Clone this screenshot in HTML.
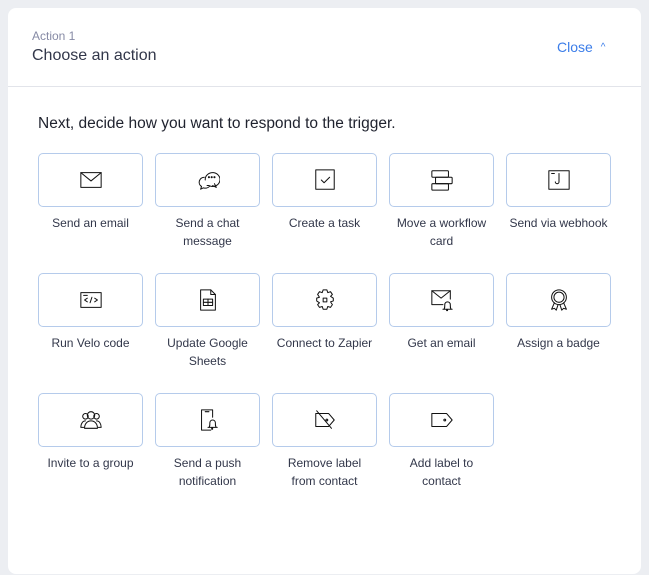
<!DOCTYPE html>
<html><head><meta charset="utf-8"><style>
*{margin:0;padding:0;box-sizing:border-box}
body{width:649px;height:575px;background:#eceef2;font-family:"Liberation Sans",sans-serif;position:relative;overflow:hidden}
.card{position:absolute;left:8px;top:8px;width:633px;height:566px;background:#fff;border-radius:8px}
.hdr{position:absolute;left:0;top:0;width:633px;height:79px;border-bottom:1px solid #e2e4ea}
.a1{position:absolute;left:24px;top:21px;font-size:12px;color:#868aa5}
.t{position:absolute;left:24px;top:39px;font-size:16px;color:#32374a}
.close{position:absolute;left:549px;top:31px;font-size:14px;color:#3b7de9}
.close span{font-size:10px;margin-left:8px;position:relative;top:-2px}
.intro{position:absolute;left:30px;top:107px;font-size:15.5px;color:#20232f}
.tile{position:absolute;width:105px;height:54px;border:1px solid #b5cbeb;border-radius:5px;display:flex;align-items:center;justify-content:center}
.tile svg{width:24px;height:24px;fill:none;stroke:#111;stroke-width:1.1;stroke-linejoin:round;stroke-linecap:round}
.lbl{position:absolute;width:117px;text-align:center;font-size:12px;line-height:18px;color:#32374a}
</style></head><body>
<div class="card">
<div class="hdr"><div class="a1">Action 1</div><div class="t">Choose an action</div><div class="close">Close<span>^</span></div></div>
<div class="intro">Next, decide how you want to respond to the trigger.</div>
</div>
<!-- row1 -->
<div class="tile" style="left:38px;top:153px"><svg viewBox="0 0 26 26"><rect x="2" y="5" width="22" height="16"/><path d="M2 5l11 9 11-9"/></svg></div>
<div class="lbl" style="left:32px;top:214px">Send an email</div>
<div class="tile" style="left:155px;top:153px"><svg viewBox="0 0 26 26"><path d="M10 13a8 7.5 0 1 1 4 6l-2 0"/><path d="M9 10a6 5.5 0 0 0-3 10l-1 3 3-1.5a6 5.5 0 0 0 7-2"/><circle cx="14" cy="10" r=".6"/><circle cx="17" cy="10" r=".6"/><circle cx="20" cy="10" r=".6"/><path d="M20 17l2 4-4-2"/></svg></div>
<div class="lbl" style="left:149px;top:214px">Send a chat<br>message</div>
<div class="tile" style="left:272px;top:153px"><svg viewBox="0 0 26 26"><rect x="3" y="2" width="20" height="21"/><path d="M9 13l3 3 6-6"/></svg></div>
<div class="lbl" style="left:266px;top:214px">Create a task</div>
<div class="tile" style="left:389px;top:153px"><svg viewBox="0 0 26 26"><rect x="2" y="3" width="18" height="7" rx="1"/><rect x="6" y="10" width="18" height="7" rx="1"/><rect x="2" y="17" width="18" height="7" rx="1"/></svg></div>
<div class="lbl" style="left:383px;top:214px">Move a workflow<br>card</div>
<div class="tile" style="left:506px;top:153px"><svg viewBox="0 0 26 26"><rect x="2" y="3" width="22" height="20"/><path d="M5 6h3M13 6v9a2 2 0 0 1-4 0"/></svg></div>
<div class="lbl" style="left:500px;top:214px">Send via webhook</div>
<!-- row2 -->
<div class="tile" style="left:38px;top:273px"><svg viewBox="0 0 26 26"><rect x="2" y="5" width="22" height="16"/><path d="M5 8h4M9 11l-3 2 3 2M17 11l3 2-3 2M14 10l-2 6"/></svg></div>
<div class="lbl" style="left:32px;top:334px">Run Velo code</div>
<div class="tile" style="left:155px;top:273px"><svg viewBox="0 0 26 26"><path d="M5 2h11l5 5v17H5z"/><path d="M16 2v5h5"/><rect x="8" y="12" width="10" height="7"/><path d="M8 15.5h10M13 12v7"/></svg></div>
<div class="lbl" style="left:149px;top:334px">Update Google<br>Sheets</div>
<div class="tile" style="left:272px;top:273px"><svg viewBox="0 0 26 26"><path d="M11 2h4l1 3 3-1 2 3-2 2 3 2v3l-3 1 2 3-2 3-3-1-1 3h-4l-1-3-3 1-2-3 2-2-3-2v-3l3-1-2-3 2-3 3 1z"/><rect x="11" y="11" width="4" height="4"/></svg></div>
<div class="lbl" style="left:266px;top:334px">Connect to Zapier</div>
<div class="tile" style="left:389px;top:273px"><svg viewBox="0 0 26 26"><path d="M14 18H2V3h20v9"/><path d="M2 3l10 8 10-8"/><path d="M14 23h10M15 23c1-1 1-2 1-5a3 3 0 0 1 6 0c0 3 0 4 1 5M18 23v1.5h1V23"/></svg></div>
<div class="lbl" style="left:383px;top:334px">Get an email</div>
<div class="tile" style="left:506px;top:273px"><svg viewBox="0 0 26 26"><circle cx="13" cy="10" r="8"/><circle cx="13" cy="10" r="5.5"/><path d="M8 16l-3 7 3-1 2 2 2-6M18 16l3 7-3-1-2 2-2-6"/></svg></div>
<div class="lbl" style="left:500px;top:334px">Assign a badge</div>
<!-- row3 -->
<div class="tile" style="left:38px;top:393px"><svg viewBox="0 0 26 26"><circle cx="13" cy="8" r="4"/><path d="M6 22c0-5 3-8 7-8s7 3 7 8z"/><circle cx="7" cy="9" r="3"/><circle cx="19" cy="9" r="3"/><path d="M5 21H2c0-4 2-7 5-7M21 21h3c0-4-2-7-5-7"/></svg></div>
<div class="lbl" style="left:32px;top:454px">Invite to a group</div>
<div class="tile" style="left:155px;top:393px"><svg viewBox="0 0 26 26"><path d="M16 24H6V2h12v8M10 4h4"/><path d="M13 21h10M14 21c1-1 1-2 1-5a3 3 0 0 1 6 0c0 3 0 4 1 5M17 21v2h1v-2"/></svg></div>
<div class="lbl" style="left:149px;top:454px">Send a push<br>notification</div>
<div class="tile" style="left:272px;top:393px"><svg viewBox="0 0 26 26"><path d="M3 6h14l6 7-6 7H3z"/><circle cx="15" cy="13" r="1"/><path d="M4 3l16 19"/></svg></div>
<div class="lbl" style="left:266px;top:454px">Remove label<br>from contact</div>
<div class="tile" style="left:389px;top:393px"><svg viewBox="0 0 26 26"><path d="M2 6h16l6 7-6 7H2z"/><circle cx="16" cy="13" r="1"/></svg></div>
<div class="lbl" style="left:383px;top:454px">Add label to<br>contact</div>
</body></html>
